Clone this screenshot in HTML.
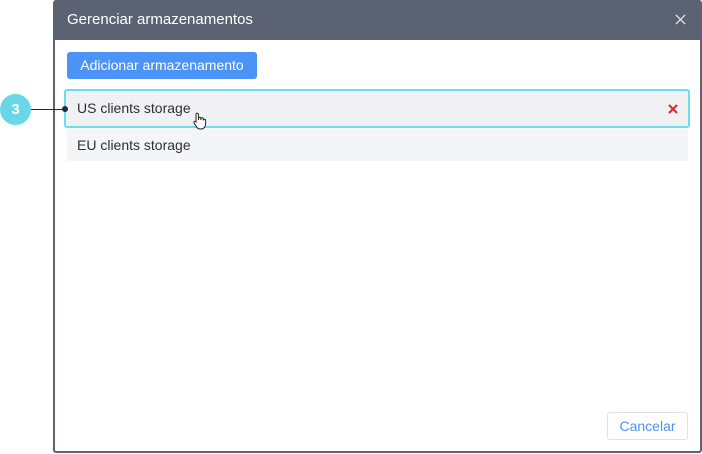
<!DOCTYPE html>
<html><head><style>
body{margin:0;width:702px;height:454px;background:#fff;position:relative;font-family:"Liberation Sans",sans-serif;overflow:hidden}
.dlg{position:absolute;left:53px;top:0;width:645px;height:451px;border:2px solid #5b6372;border-top:none;border-radius:3px;background:#fff}
.hdr{position:absolute;left:0;top:0;width:645px;height:40px;background:#5b6372;color:#fff;font-size:15px;line-height:40px;padding-left:12px;box-sizing:border-box}
.x{position:absolute;right:14px;top:14px}
.btn{position:absolute;left:12px;top:52px;width:190px;height:27px;background:#4b93f7;border-radius:3px;color:#fff;font-size:14px;line-height:27px;text-align:center}
.r1{position:absolute;left:9px;top:89px;width:611px;height:35px;border:2px solid #6ddcec;border-radius:3px;background:#f0f1f3;font-size:14px;color:#2a2f3a;line-height:35px;padding-left:11px}
.r2{position:absolute;left:12px;top:129px;width:621px;height:32px;background:#f4f5f6;font-size:14px;color:#2a2f3a;line-height:32px;padding-left:10px;box-sizing:border-box}
.cancel{position:absolute;left:552px;top:412px;width:79px;height:26px;border:1px solid #dfe3e8;border-radius:3px;color:#4b93f7;font-size:14px;line-height:26px;text-align:center}
.c{position:absolute;left:0;top:94px;width:31px;height:31px;border-radius:50%;background:#6ad6ea;color:#fff;font-weight:bold;font-size:15px;line-height:31px;text-align:center}
</style></head><body>
<div class="dlg">
<div class="hdr">Gerenciar armazenamentos
<svg class="x" width="11" height="11" viewBox="0 0 12 12"><path d="M1 1L11 11M11 1L1 11" stroke="#e6e8ec" stroke-width="1.4"/></svg></div>
<div class="btn">Adicionar armazenamento</div>
<div class="r1">US clients storage
<svg style="position:absolute;right:10px;top:13px" width="10" height="10" viewBox="0 0 10 10"><path d="M1 1L9 9M9 1L1 9" stroke="#e0262b" stroke-width="2"/></svg></div>
<div class="r2">EU clients storage</div>
<div class="cancel">Cancelar</div>
</div>
<div class="c">3</div>
<div style="position:absolute;left:31px;top:108.5px;width:33px;height:1.5px;background:#1d2a44"></div>
<div style="position:absolute;left:62px;top:106px;width:6px;height:6px;border-radius:50%;background:#1d2a44"></div>
<svg style="position:absolute;left:192px;top:112px" width="16" height="18" viewBox="0 0 16 18"><path d="M4 9V2.5a1.2 1.2 0 0 1 2.4 0V8V6.5a1.2 1.2 0 0 1 2.4 0V8V7a1.2 1.2 0 0 1 2.4 0V8.5a1.2 1.2 0 0 1 2.4 0V12c0 3-2 5-4.5 5H8c-2 0-3-1-4-3L2 11a1.2 1.2 0 0 1 2-1.3z" fill="#fff" stroke="#222" stroke-width="1"/></svg>
</body></html>
